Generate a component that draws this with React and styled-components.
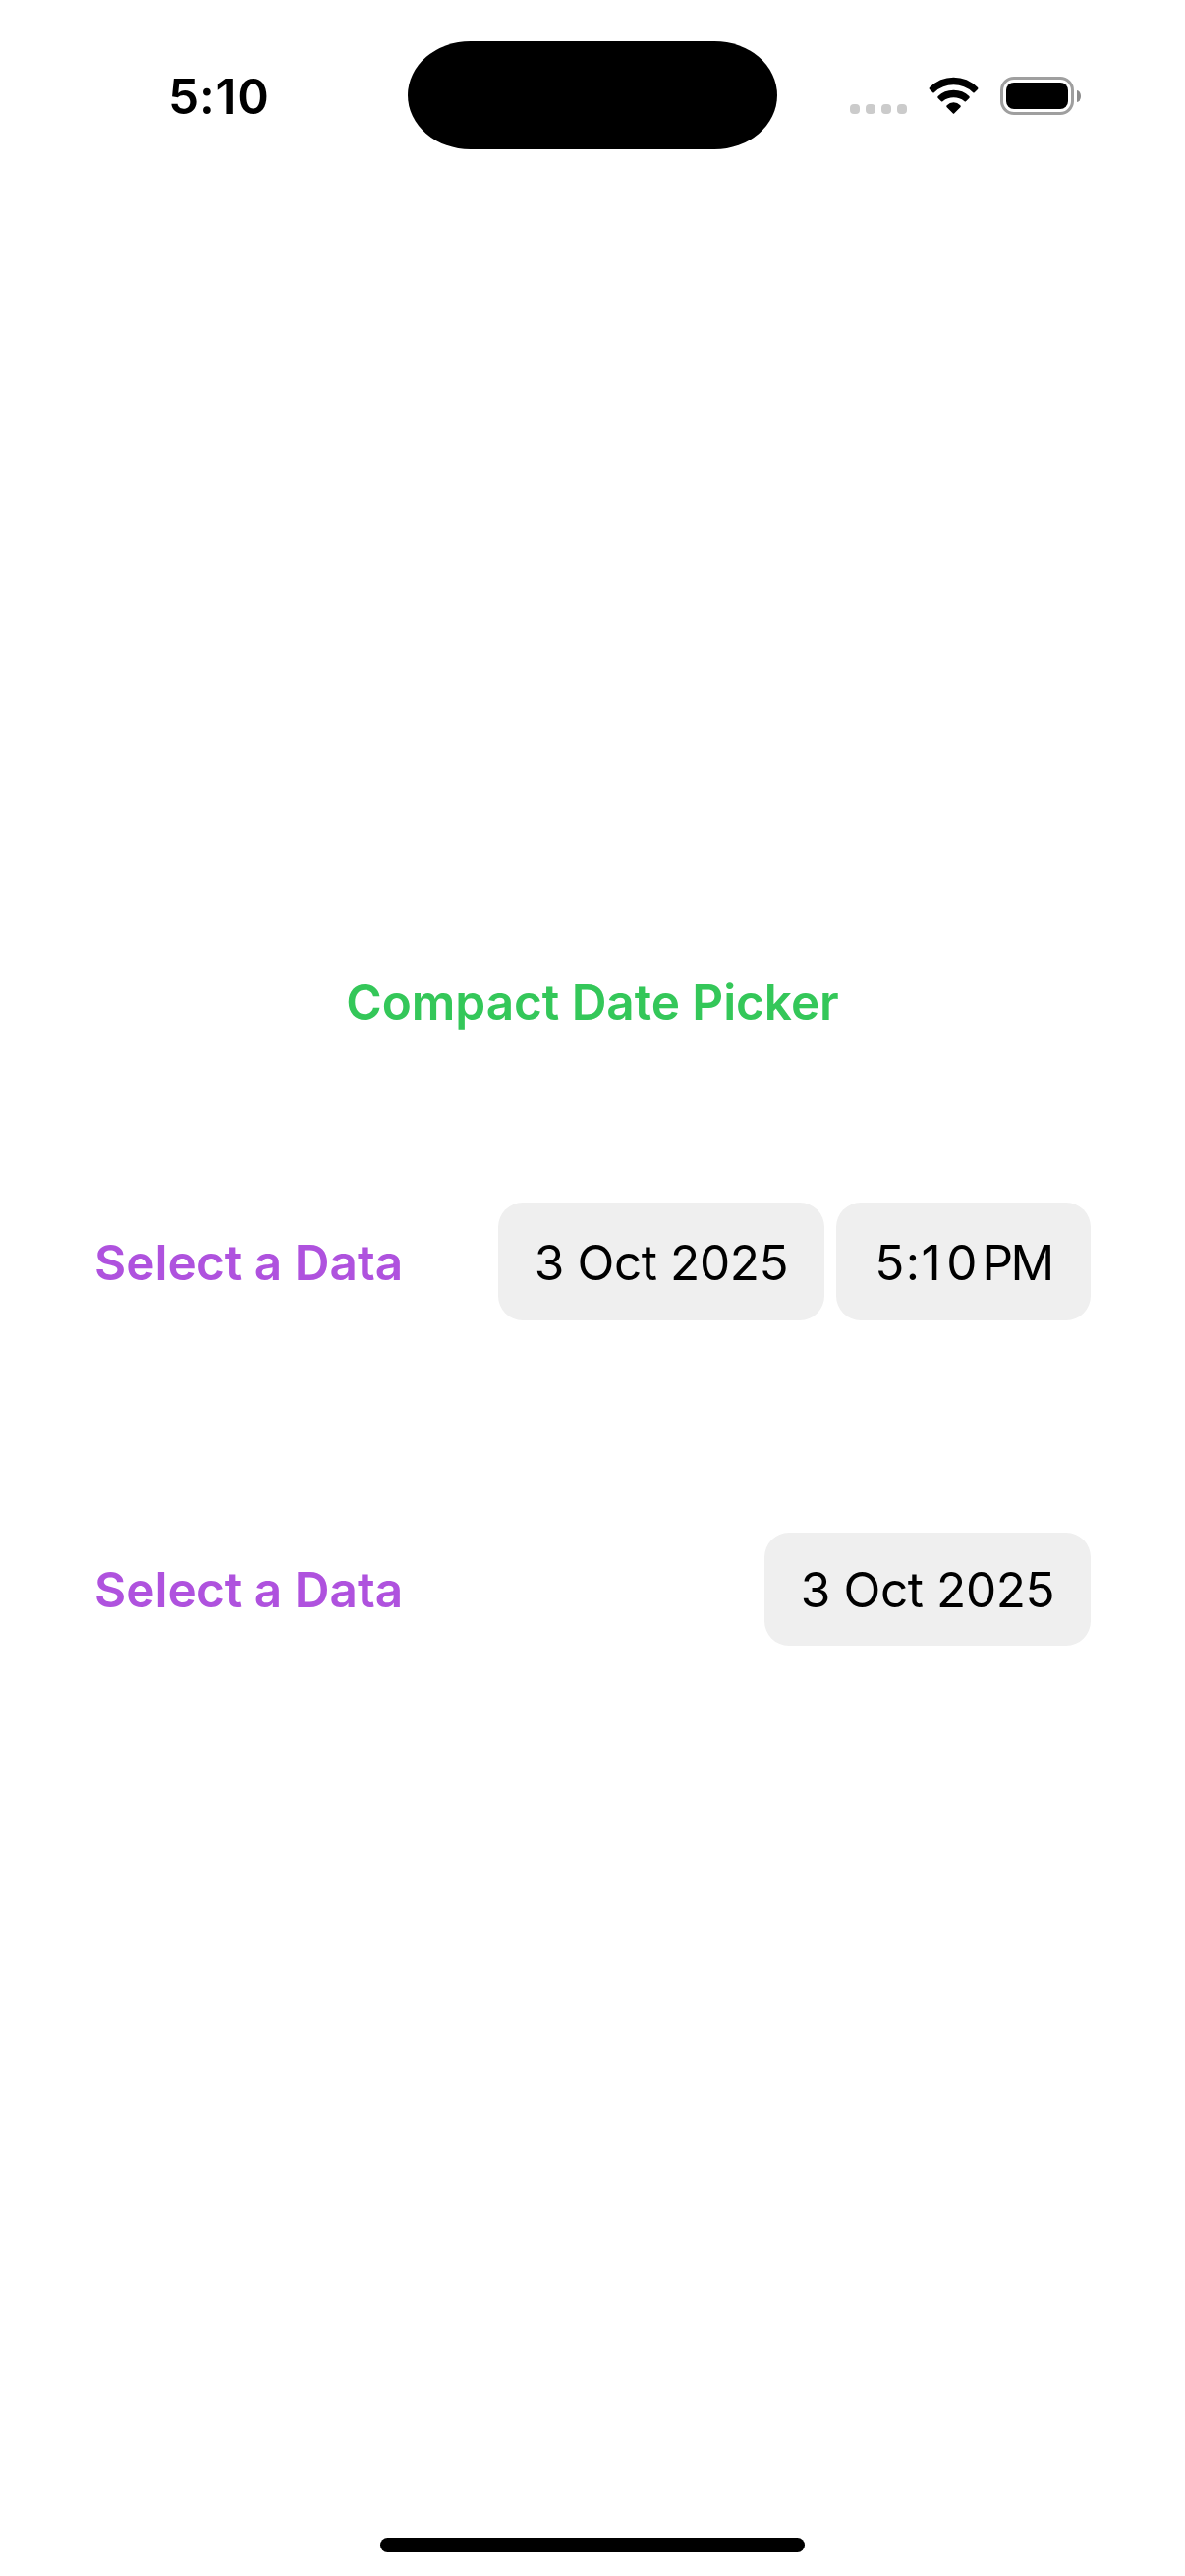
import React from "react";
import styled, { createGlobalStyle } from "styled-components";

const GlobalStyle = createGlobalStyle`
  body { margin: 0; background: #fff; }
  * { box-sizing: border-box; }
`;

const Screen = styled.main`
  display: flex;
  flex-direction: column;
  width: 1206px;
  height: 2622px;
  background: #fff;
  color: #000;
  font-family: Inter, "Liberation Sans", sans-serif;
  font-size: 49.5px;
  line-height: 60px;
  white-space: nowrap;
`;

const StatusBar = styled.header`
  display: grid;
  grid-template-columns: 415px 376px 415px;
  align-items: center;
  height: 194px;
`;

const Clock = styled.time`
  padding: 2px 0 0 171px;
  font-weight: 600;
  letter-spacing: 0.8px;
`;

const Island = styled.div`
  height: 110.5px;
  border-radius: 64px / 55.25px;
  background: #000;
`;

const Indicators = styled.div`
  display: flex;
  align-items: center;
  height: 39px;
  padding-left: 74px;
  margin-top: 1px;
`;

const Dots = styled.div`
  display: flex;
  gap: 6px;
  align-self: flex-end;
  padding-bottom: 1px;
  margin-right: 22px;
`;

const Dot = styled.i`
  width: 10px;
  height: 10px;
  border-radius: 4px;
  background: #cbcbcb;
`;

const WifiGlyph = styled.svg`
  width: 51px;
  height: 39px;
  margin-right: 22px;
`;

const BatteryShell = styled.div`
  width: 75px;
  height: 39px;
  padding: 3px;
  border: 3px solid #9f9f9f;
  border-radius: 14px;
`;

const BatteryLevel = styled.div`
  height: 100%;
  border-radius: 8px;
  background: #000;
`;

const BatteryTip = styled.div`
  width: 4px;
  height: 12px;
  margin-left: 3px;
  border-radius: 0 4px 4px 0 / 0 6px 6px 0;
  background: #8c8c8c;
`;

const Content = styled.section`
  flex: 1;
  display: flex;
  flex-direction: column;
  padding: 796px 96px 0;
`;

const Title = styled.h1`
  margin: 0 0 174px;
  font-size: inherit;
  font-weight: 600;
  letter-spacing: -0.05px;
  color: #34c759;
  text-align: center;
`;

const PickerRow = styled.div`
  display: flex;
  align-items: center;
  justify-content: space-between;
  margin-bottom: 216px;
`;

const Label = styled.span`
  padding-top: ${(p) => p.$nudge || "0"};
  font-weight: 600;
  letter-spacing: 0.05px;
  color: #af52de;
`;

const Fields = styled.div`
  display: flex;
  gap: 12px;
`;

const Field = styled.button`
  display: flex;
  align-items: center;
  justify-content: center;
  gap: ${(p) => p.$gap || "0"};
  width: ${(p) => p.$width};
  height: ${(p) => p.$height};
  padding: ${(p) => p.$nudge || "0"} 0 0;
  border: 0;
  border-radius: 25px;
  background: #efefef;
  color: #000;
  font: inherit;
  letter-spacing: -0.4px;
`;

const Digits = styled.span`
  letter-spacing: 1.5px;
`;

const NarrowOne = styled.span`
  letter-spacing: 5.5px;
`;

const Period = styled.span`
  letter-spacing: -2.5px;
`;

const HomeArea = styled.footer`
  display: flex;
  justify-content: center;
  padding-bottom: 24px;
`;

const HomeBar = styled.div`
  width: 432px;
  height: 15px;
  border-radius: 8px;
  background: #000;
`;

function Wifi() {
  return (
    <WifiGlyph viewBox="315 84 153 117" aria-hidden="true">
      <path d="M318 117 Q349 86 391.500 86 Q434 86 465 117 Q468 120 465 123 L455 133 Q453 135 450 132 Q425 109 391.500 109 Q358 109 333 132 Q330 135 328 133 L318 123 Q315 120 318 117Z" />
      <path d="M344 144 Q363 125 391.500 125 Q420 125 439 144 Q442 147 439 150 L429 160 Q427 162 424 159 Q410 148 391.500 148 Q373 148 359 159 Q356 162 354 160 L344 150 Q341 147 344 144Z" />
      <path d="M371 172 Q380 163 391.500 163 Q403 163 412 172 Q415 175 412 178 L394 196 Q391.500 199 389 196 L371 178 Q368 175 371 172Z" />
    </WifiGlyph>
  );
}

export default function App() {
  return (
    <Screen>
      <GlobalStyle />
      <StatusBar>
        <Clock>5:10</Clock>
        <Island />
        <Indicators>
          <Dots>
            <Dot />
            <Dot />
            <Dot />
            <Dot />
          </Dots>
          <Wifi />
          <BatteryShell>
            <BatteryLevel />
          </BatteryShell>
          <BatteryTip />
        </Indicators>
      </StatusBar>
      <Content>
        <Title>Compact Date Picker</Title>
        <PickerRow>
          <Label $nudge="2px">Select a Data</Label>
          <Fields>
            <Field $width="332px" $height="120px" $nudge="2px">3 Oct 2025</Field>
            <Field $width="259px" $height="120px" $nudge="2px" $gap="3.5px">
              <Digits>
                5:<NarrowOne>1</NarrowOne>0
              </Digits>
              <Period>PM</Period>
            </Field>
          </Fields>
        </PickerRow>
        <PickerRow>
          <Label>Select a Data</Label>
          <Field $width="332px" $height="115px">3 Oct 2025</Field>
        </PickerRow>
      </Content>
      <HomeArea>
        <HomeBar />
      </HomeArea>
    </Screen>
  );
}
